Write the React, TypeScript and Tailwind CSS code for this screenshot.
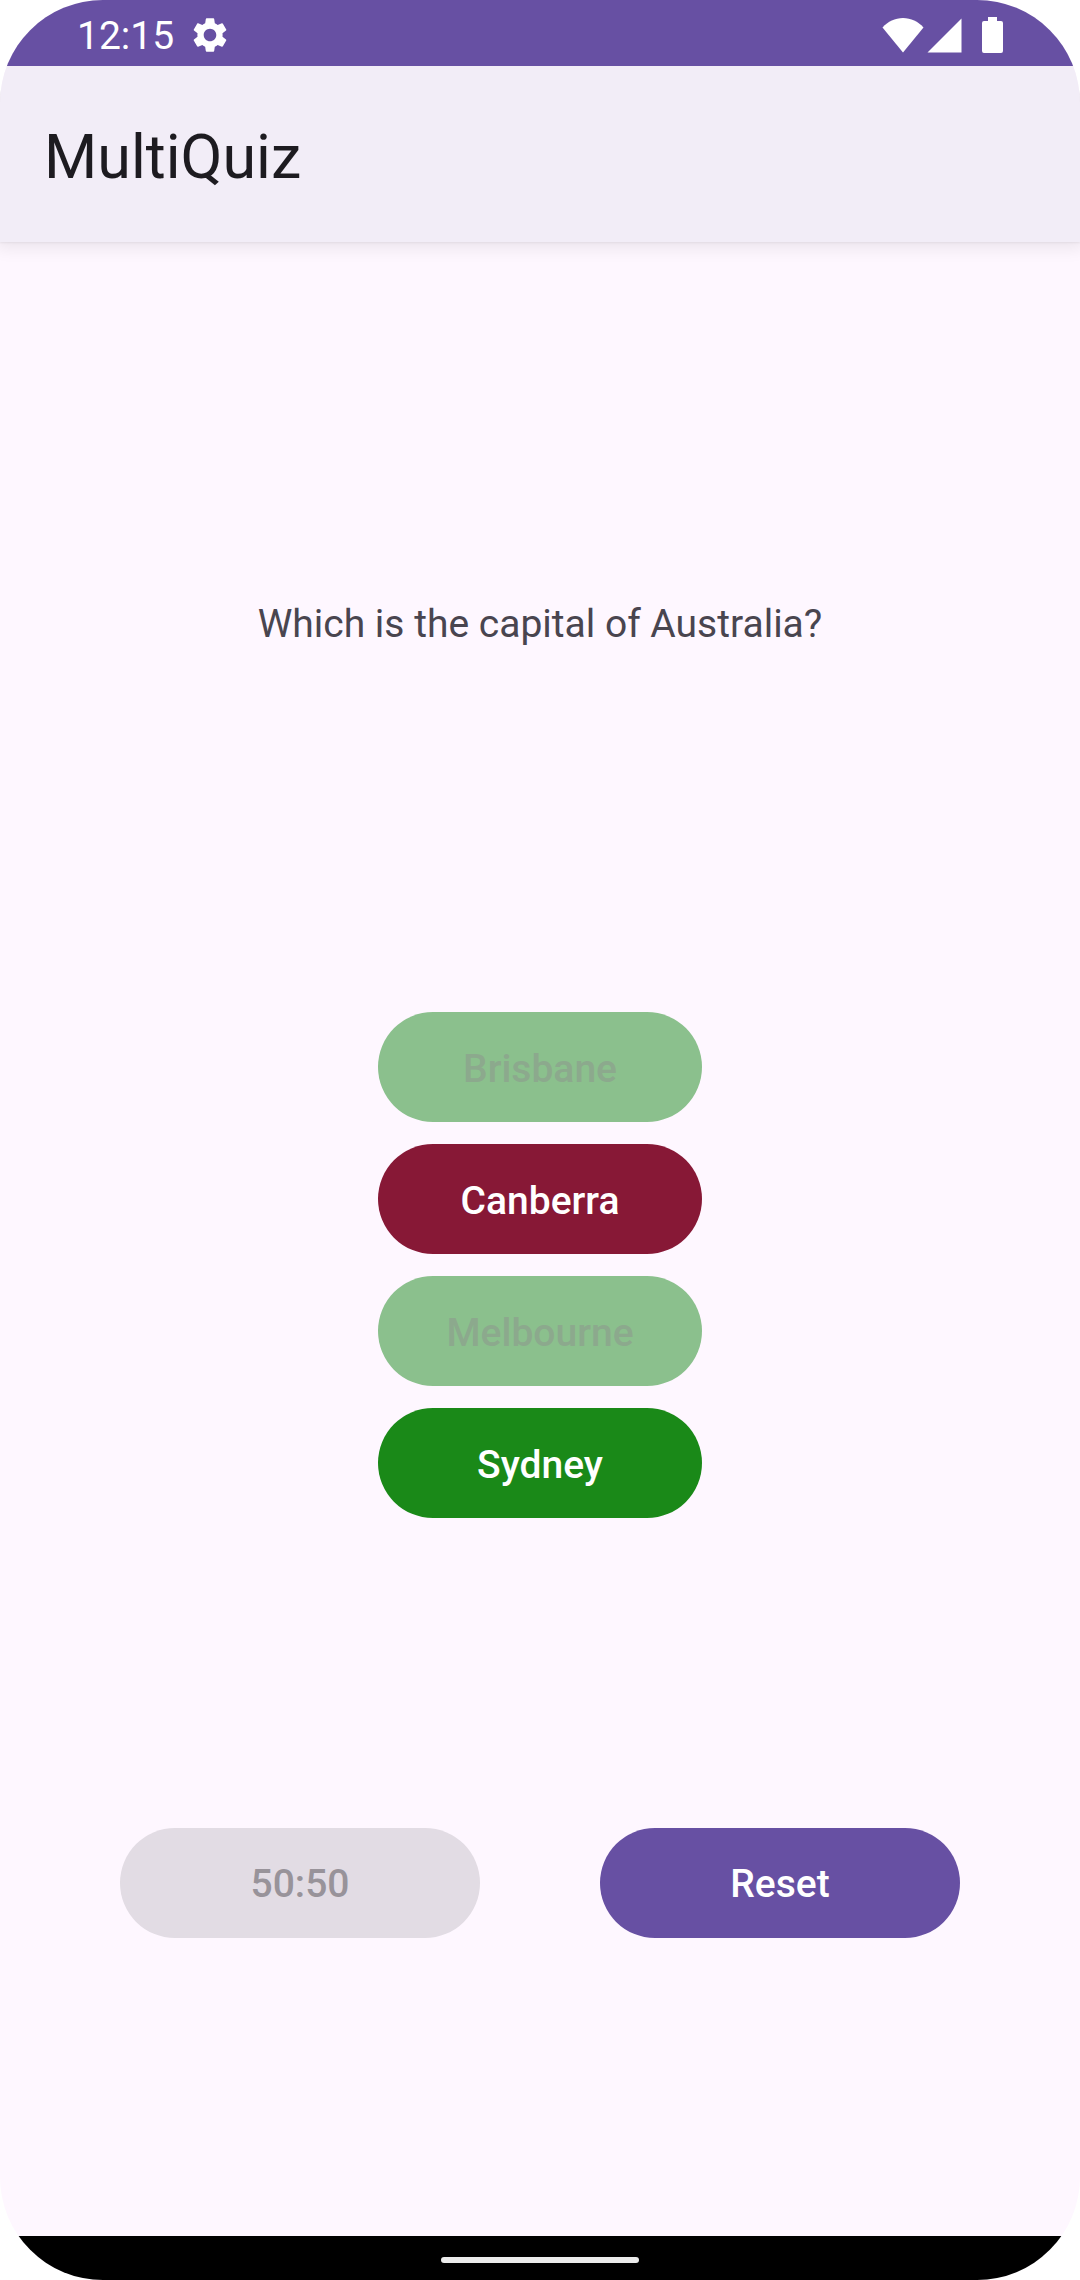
import { useState } from "react";
import { MdSettings } from "react-icons/md";

type Answer = { label: string; tone: string; disabled: boolean };

const answers: Answer[] = [
  { label: "Brisbane", tone: "bg-[#8bc08d] text-[#8ca98d]", disabled: true },
  { label: "Canberra", tone: "bg-[#871836] text-white", disabled: false },
  { label: "Melbourne", tone: "bg-[#8bc08d] text-[#8ca98d]", disabled: true },
  { label: "Sydney", tone: "bg-[#1a8918] text-white", disabled: false },
];

function StatusBar() {
  return (
    <div className="flex h-[66px] items-center justify-between bg-[#6750a3] pt-[3px] pr-[77px] pl-[77px] text-white">
      <div className="flex items-center gap-[15px]">
        <time className="pt-1 text-[39px] leading-none">12:15</time>
        <MdSettings size={42} aria-label="Settings" />
      </div>
      <div className="flex items-center">
        <svg width="42" height="36" viewBox="0 0 42 36" fill="currentColor" aria-label="Wi-Fi">
          <path d="M21 35.5 0.5 10.5C6 4.500 13 1 21 1s15 3.500 20.500 9.500z" />
        </svg>
        <svg className="ml-[3px]" width="35" height="36" viewBox="0 0 35 36" fill="currentColor" aria-label="Signal">
          <path d="M34.500 1.500v34H0.500z" />
        </svg>
        <svg className="ml-5" width="21" height="36" viewBox="0 0 21 36" fill="currentColor" aria-label="Battery">
          <path d="M6 0h9v4h4a2 2 0 0 1 2 2v28a2 2 0 0 1-2 2H2a2 2 0 0 1-2-2V6a2 2 0 0 1 2-2h4z" />
        </svg>
      </div>
    </div>
  );
}

export default function App() {
  const [picked, setPicked] = useState("Canberra");

  return (
    <div className="min-h-screen bg-white">
      <div className="flex min-h-screen flex-col overflow-hidden rounded-[103px] bg-[#fef7ff] font-['Roboto',sans-serif]">
        <StatusBar />
        <header className="flex h-44 items-center bg-[#f2edf7] px-11 pt-[6px] shadow-[0_1px_2px_rgba(0,0,0,0.06),0_2px_16px_4px_rgba(0,0,0,0.08)] [clip-path:inset(0_0_-30px_0)]">
          <h1 className="text-[61px] leading-none text-[#1d1b20]">MultiQuiz</h1>
        </header>

        <main className="flex grow flex-col">
          <div className="flex grow-[759] basis-0 items-center justify-center">
            <p className="pt-[5px] text-[39px] leading-none text-[#49454f]">Which is the capital of Australia?</p>
          </div>

          <div className="grid gap-[22px] self-center py-[11px]">
            {answers.map((answer) => (
              <button
                key={answer.label}
                type="button"
                disabled={answer.disabled}
                aria-pressed={picked === answer.label}
                onClick={() => setPicked(answer.label)}
                className={`h-[110px] rounded-full px-[68px] pt-1 text-[39px] leading-none font-medium ${answer.tone}`}
              >
                {answer.label}
              </button>
            ))}
          </div>

          <div className="flex grow-[707] basis-0 items-center justify-evenly">
            <button
              type="button"
              disabled
              className="h-[110px] w-1/3 rounded-full bg-[#e2dce4] pt-[3px] text-[39px] leading-none font-medium text-[#98939a]"
            >
              50:50
            </button>
            <button
              type="button"
              onClick={() => setPicked("")}
              className="h-[110px] w-1/3 rounded-full bg-[#6750a3] pt-[3px] text-[39px] leading-none font-medium text-white"
            >
              Reset
            </button>
          </div>
        </main>

        <div className="flex h-11 items-center justify-center bg-black pt-[4px]">
          <div className="h-[6px] w-[198px] rounded-full bg-[#ebebeb]" />
        </div>
      </div>
    </div>
  );
}
